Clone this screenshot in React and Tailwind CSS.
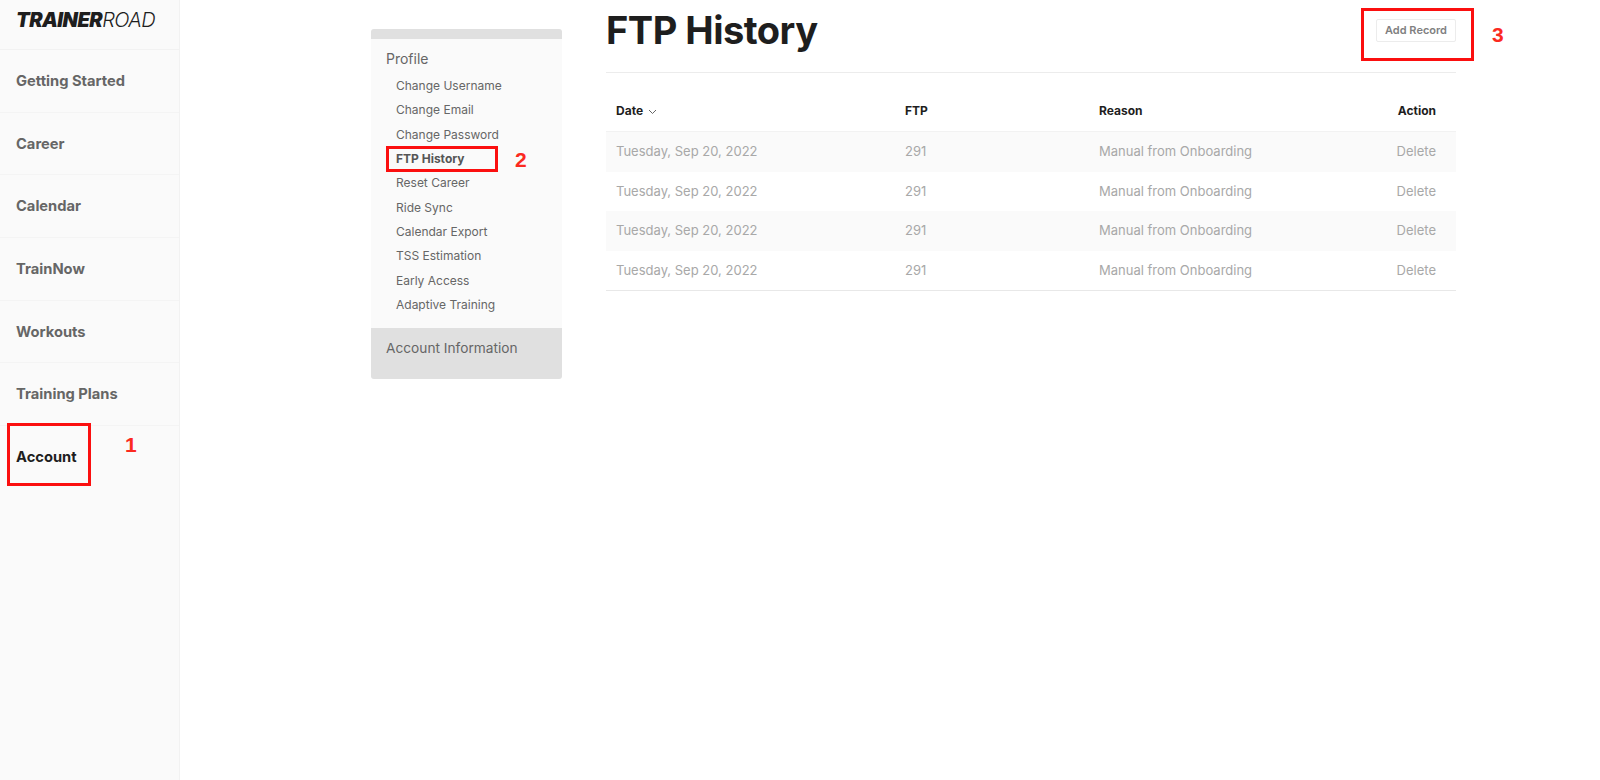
const navItems = ['Getting Started', 'Career', 'Calendar', 'TrainNow', 'Workouts', 'Training Plans']

const profileLinks = [
  'Change Username',
  'Change Email',
  'Change Password',
  'FTP History',
  'Reset Career',
  'Ride Sync',
  'Calendar Export',
  'TSS Estimation',
  'Early Access',
  'Adaptive Training',
]

const rows = [0, 1, 2, 3]

function Sidebar() {
  return (
    <aside className="w-[180px] shrink-0 min-h-[780px] bg-[#fafafa] border-r border-[#f2f2f2]">
      <div className="h-[50px] pl-4 pt-[9px] border-b border-[#f2f2f2] text-[20px] leading-[22px] italic text-[#1e1e1e] tracking-[-0.55px]">
        <span className="font-black">TRAINER</span>
        <span className="font-light">ROAD</span>
      </div>
      {navItems.map(item => (
        <div
          key={item}
          className="h-[62.7px] pl-4 flex items-center border-b border-[#f4f4f4] text-[14.7px] font-bold text-[#666666]"
        >
          {item}
        </div>
      ))}
      <div className="h-[62px] pl-4 flex items-center text-[14.7px] font-bold text-[#1e1e1e]">Account</div>
    </aside>
  )
}

function AccountMenu() {
  return (
    <div className="w-[191px] shrink-0 mt-[29px] h-[350px] rounded-[3px] overflow-hidden bg-[#fafafa]">
      <div className="h-[10px] bg-[#e0e0e0]" />
      <div className="h-[289px] pt-[10px] pl-[15px]">
        <div className="text-[14px] leading-[20px] text-[#666666]">Profile</div>
        <ul className="mt-[5px] pl-[10px]">
          {profileLinks.map(link => (
            <li
              key={link}
              className={`h-[24.3px] flex items-center text-[12px] ${link === 'FTP History' ? 'font-bold text-[#555555]' : 'text-[#666666]'}`}
            >
              {link}
            </li>
          ))}
        </ul>
      </div>
      <div className="h-[51px] bg-[#e0e0e0] pt-[10px] pl-[15px] text-[13.7px] leading-[20px] text-[#666666]">
        Account Information
      </div>
    </div>
  )
}

function HistoryTable() {
  return (
    <div className="text-[13px]">
      <div className="h-[59px] pt-[18px] flex items-center pl-[10px] pr-[20px] border-b border-[#f2f2f2] text-[12px] font-bold text-[#1e1e1e]">
        <div className="w-[289px] flex items-center gap-[5px]">
          Date
          <svg width="9" height="6" viewBox="0 0 9 6" fill="none" stroke="#666666" strokeWidth="1" className="mt-[2px]">
            <path d="M1 1l3.5 3.5L8 1" />
          </svg>
        </div>
        <div className="w-[194px]">FTP</div>
        <div className="flex-1">Reason</div>
        <div>Action</div>
      </div>
      {rows.map(i => (
        <div
          key={i}
          className={`h-[39.5px] flex items-center pl-[10px] pr-[20px] text-[#a8a8a8] ${i % 2 === 0 ? 'bg-[#fafafa]' : 'bg-white'}`}
        >
          <div className="w-[289px]">Tuesday, Sep 20, 2022</div>
          <div className="w-[194px]">291</div>
          <div className="flex-1">Manual from Onboarding</div>
          <div>Delete</div>
        </div>
      ))}
      <div className="h-px bg-[#e8e8e8]" />
    </div>
  )
}

export default function App() {
  return (
    <div className="relative flex h-[780px] overflow-hidden bg-white font-['Inter',sans-serif]">
      <Sidebar />
      <main className="flex pl-[191px] gap-[44px]">
        <AccountMenu />
        <div className="w-[850px]">
          <div className="h-[73px] flex justify-between border-b border-[#ececec]">
            <h1 className="text-[38px] leading-[60px] font-bold text-[#1e1e1e] tracking-[-0.5px]">FTP History</h1>
            <button className="mt-[19px] h-[23px] px-[8px] border border-[#ececec] rounded-[2px] bg-white text-[11px] font-semibold text-[#808080]">
              Add Record
            </button>
          </div>
          <HistoryTable />
        </div>
      </main>

      {/* Red tutorial annotations */}
      <div className="absolute left-[7px] top-[423px] w-[84px] h-[63px] border-[3px] border-[#fb0f0f]" />
      <span className="absolute left-[125px] top-[432px] text-[21px] leading-[26px] font-bold text-[#fb2a1f] font-['Liberation_Sans',sans-serif]">1</span>
      <div className="absolute left-[386px] top-[146px] w-[112px] h-[26px] border-[3px] border-[#fb0f0f]" />
      <span className="absolute left-[515px] top-[147px] text-[21px] leading-[26px] font-bold text-[#fb2a1f] font-['Liberation_Sans',sans-serif]">2</span>
      <div className="absolute left-[1361px] top-[8px] w-[113px] h-[53px] border-[3px] border-[#fb0f0f]" />
      <span className="absolute left-[1492px] top-[22px] text-[21px] leading-[26px] font-bold text-[#fb2a1f] font-['Liberation_Sans',sans-serif]">3</span>
    </div>
  )
}
